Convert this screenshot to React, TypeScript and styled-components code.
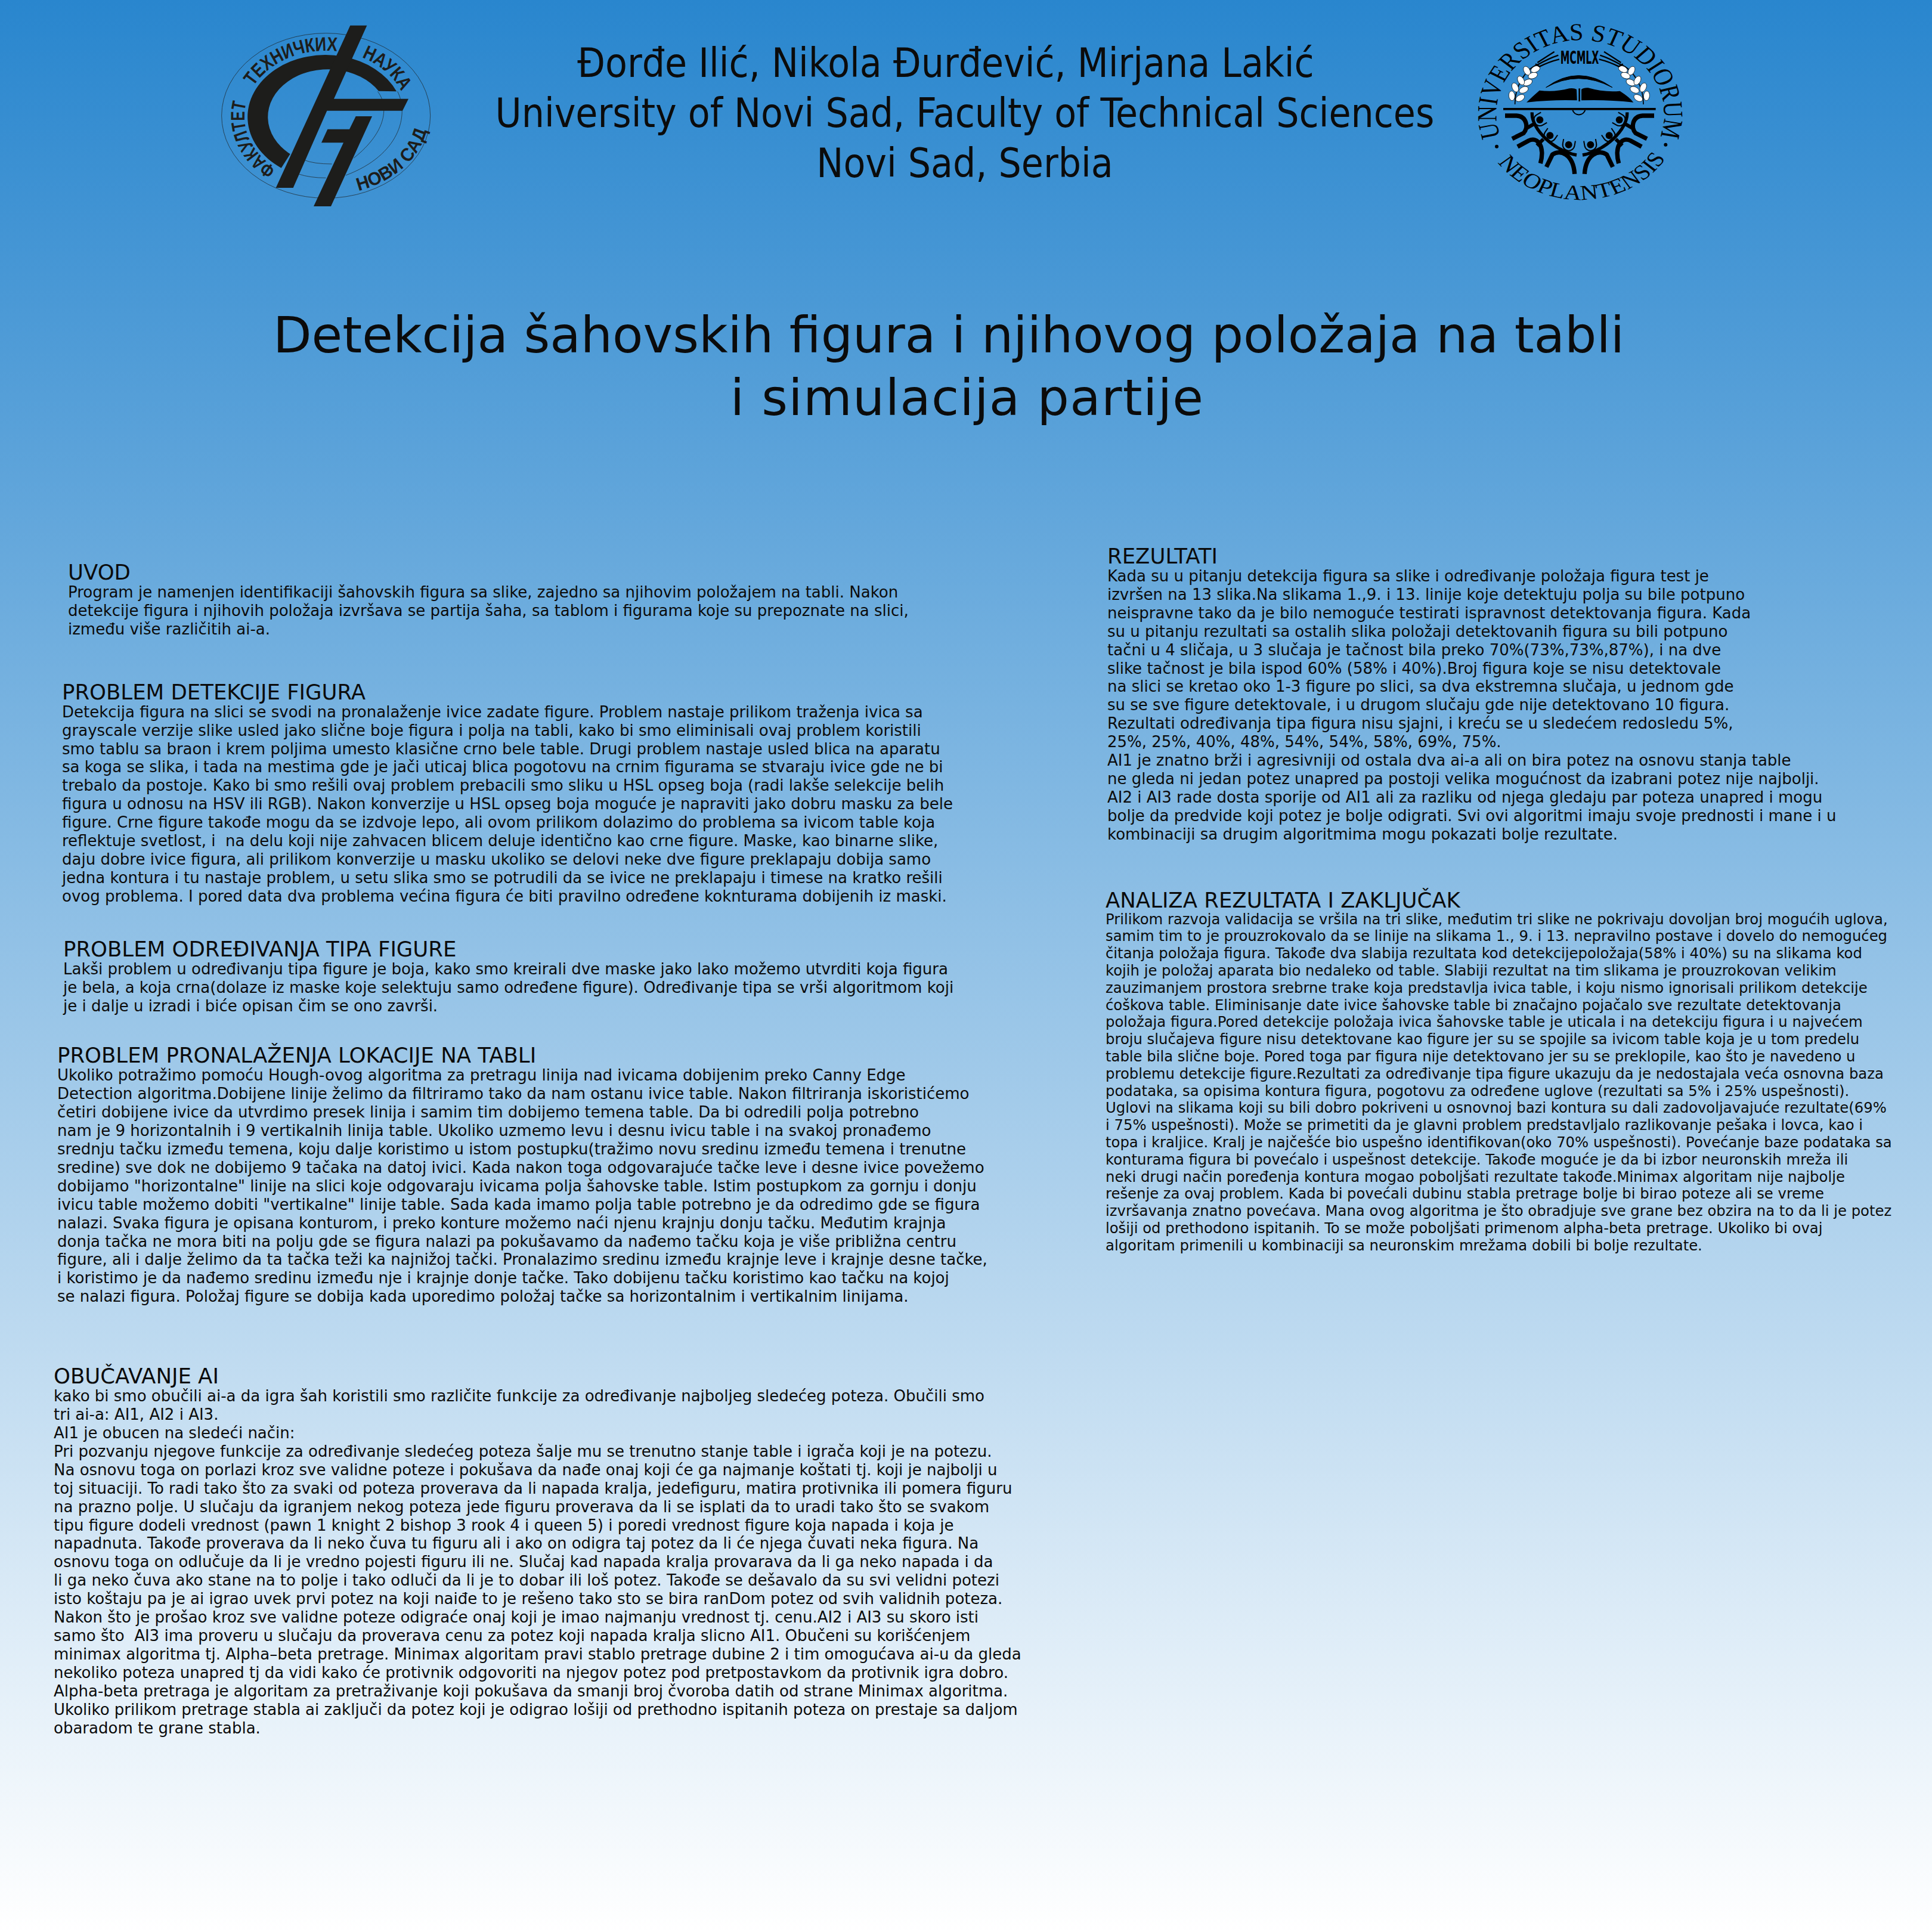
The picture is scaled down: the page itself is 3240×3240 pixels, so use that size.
import React from 'react';
import styled, { createGlobalStyle } from 'styled-components';

const GlobalStyle = createGlobalStyle`
  html, body {
    margin: 0;
    padding: 0;
  }
`;

const Page = styled.div`
  width: 3240px;
  height: 3240px;
  overflow: hidden;
  background: linear-gradient(180deg, #2986ce 0%, #ffffff 100%);
  color: #0b0b0b;
  font-family: 'DejaVu Sans', 'Liberation Sans', sans-serif;
`;

const Header = styled.header`
  display: grid;
  grid-template-columns: 420px 1680px 420px;
  padding: 20px 0 0 340px;
  height: 340px;
`;

const LogoSvg = styled.svg`
  width: 420px;
  height: 340px;
  display: block;
`;

const Affiliation = styled.div`
  padding: 44px 0 0 36px;
  font-family: 'DejaVu Sans Condensed', 'DejaVu Sans', sans-serif;
  font-stretch: condensed;
  font-size: 67px;
  line-height: 84px;
  text-align: center;
`;

const AffiliationLine = styled.div<{ $trail?: number }>`
  white-space: pre;
  padding-right: ${(p) => p.$trail ?? 0}px;
`;

const Title = styled.h1`
  margin: 150px 0 0;
  font-size: 84px;
  line-height: 105px;
  font-weight: 400;
  text-align: center;
  padding-left: 4px;
`;

const TitleLine = styled.div<{ $trail?: number; $tracking?: number }>`
  white-space: pre;
  padding-right: ${(p) => p.$trail ?? 0}px;
  letter-spacing: ${(p) => p.$tracking ?? 0}px;
`;

const Columns = styled.main`
  display: grid;
  grid-template-columns: 1820px 1420px;
`;

const Column = styled.div<{ $top: number }>`
  display: flex;
  flex-direction: column;
  padding-top: ${(p) => p.$top}px;
`;

const Section = styled.section<{ $left: number; $gap: number }>`
  margin-left: ${(p) => p.$left}px;
  margin-top: ${(p) => p.$gap}px;
`;

const Heading = styled.h2`
  margin: 0;
  font-size: 35.5px;
  line-height: 36px;
  font-weight: 400;
  white-space: pre;
`;

const Line = styled.div<{ $small?: boolean }>`
  white-space: pre;
  font-size: ${(p) => (p.$small ? 24.3 : 26)}px;
  line-height: ${(p) => (p.$small ? 28.8 : 30.9)}px;
`;

const ink = '#1d1d1b';

const FacultyLogo = () => (
  <LogoSvg viewBox="0 0 1260 1020">
    <defs>
      <path id="ftn-top" d="M 620 855 A 410 330 0 1 1 620.1 855" />
      <path id="ftn-bottom" d="M 620 920 A 515 395 0 1 0 619.9 920" />
    </defs>
    <g fill="none" stroke={ink} strokeWidth="2">
      <ellipse cx="620" cy="522" rx="525" ry="415" />
      <path d="M 880 400 C 935 470 930 600 760 735" />
      <path d="M 510 745 Q 560 765 650 765" />
      <path d="M 980 400 C 1040 520 990 720 720 822" />
      <path d="M 480 815 Q 540 835 620 835" />
    </g>
    <g fill={ink}>
      <path d="M 975 400 A 392 312 0 1 0 395 785 L 440 715 A 303 240 0 1 1 885 398 Z" />
      <polygon points="742,68 826,68 660,437 1035,437 1005,497 625,497 455,885 368,885" />
      <polygon points="770,525 852,525 645,978 558,978 708,658 597,658 628,590 738,590" />
    </g>
    <g fill={ink} fontFamily="'Liberation Sans', sans-serif" fontWeight="700">
      <text fontSize="98">
        <textPath href="#ftn-top" startOffset="262" textLength="391" lengthAdjust="spacingAndGlyphs">
          ФАКУЛТЕТ
        </textPath>
      </text>
      <text fontSize="98">
        <textPath href="#ftn-top" startOffset="742" textLength="479" lengthAdjust="spacingAndGlyphs">
          ТЕХНИЧКИХ
        </textPath>
      </text>
      <text fontSize="98">
        <textPath href="#ftn-top" startOffset="1349" textLength="269" lengthAdjust="spacingAndGlyphs">
          НАУКА
        </textPath>
      </text>
      <text fontSize="92">
        <textPath href="#ftn-bottom" startOffset="165" textLength="480" lengthAdjust="spacingAndGlyphs">
          НОВИ САД
        </textPath>
      </text>
    </g>
  </LogoSvg>
);

const grains: [number, number, number][] = [
  [286, 422, 85],
  [303, 380, 65],
  [328, 433, -30],
  [346, 392, -25],
  [366, 355, -25],
  [332, 345, 60],
  [362, 296, 60],
  [392, 320, -20],
  [405, 288, -25],
];

const WheatBranch = () => (
  <g>
    <path d="M 302 465 C 300 380 350 290 420 262" fill="none" stroke="#000" strokeWidth="5" />
    {grains.map(([x, y, r]) => (
      <ellipse
        key={`${x}-${y}`}
        cx={x}
        cy={y}
        rx="24"
        ry="15"
        transform={`rotate(${r} ${x} ${y})`}
        fill="#fff"
        stroke="#000"
        strokeWidth="2"
      />
    ))}
    <g fill="none" stroke="#000" strokeWidth="7">
      <path d="M 415 255 Q 460 225 500 200" />
      <path d="M 418 265 Q 470 235 520 218" />
      <path d="M 425 275 Q 475 250 525 238" />
      <path d="M 405 262 L 428 277" />
    </g>
  </g>
);

const arches = [
  'M 252 522 L 310 522 C 360 525 372 580 345 610 L 288 638',
  'M 315 678 L 370 648 C 420 625 452 680 430 762',
  'M 460 780 L 490 718 C 530 690 595 715 602 815',
];

const cups: [number, number, number][] = [
  [427, 543, 60],
  [478, 622, 35],
  [572, 668, 10],
];

const GearHalf = () => (
  <g>
    <g fill="none" stroke="#000" strokeWidth="22">
      {arches.map((d) => (
        <path key={d} d={d} />
      ))}
    </g>
    <path d="M 352 590 L 395 565 M 412 672 L 445 640 M 525 705 L 540 690" stroke="#000" strokeWidth="18" fill="none" />
    <path d="M 388 505 C 382 590 500 700 612 720" fill="none" stroke="#000" strokeWidth="16" />
    {cups.map(([x, y, r]) => (
      <g key={`${x}-${y}`}>
        <path
          d={`M ${x - 30} ${y - 24} L ${x - 30} ${y} A 30 30 0 0 0 ${x + 30} ${y} L ${x + 30} ${y - 24}`}
          transform={`rotate(${r} ${x} ${y})`}
          fill="none"
          stroke="#000"
          strokeWidth="6"
        />
        <circle cx={x} cy={y} r="18" fill="#000" />
      </g>
    ))}
  </g>
);

const UniversityLogo = () => (
  <LogoSvg viewBox="0 0 1260 1020">
    <defs>
      <path id="uns-top" d="M 0 370 A 370 370 0 1 1 0.1 370" />
      <path id="uns-bottom" d="M -435 0 A 435 435 0 1 0 435 0" />
    </defs>
    <g fontFamily="'Liberation Serif', serif" fill="#000">
      <g transform="translate(630 512) scale(1.14 1)">
        <text fontSize="122">
          <textPath href="#uns-top" startOffset="462" textLength="1400" lengthAdjust="spacingAndGlyphs">
            UNIVERSITAS STUDIORUM
          </textPath>
        </text>
      </g>
      <g transform="translate(630 510) scale(1.16 1)">
        <text fontSize="106">
          <textPath href="#uns-bottom" startOffset="263" textLength="865" lengthAdjust="spacingAndGlyphs">
            NEOPLANTENSIS
          </textPath>
        </text>
      </g>
      <text
        x="530"
        y="260"
        fontFamily="'DejaVu Sans Condensed', 'DejaVu Sans', sans-serif"
        fontWeight="700"
        fontSize="92"
        textLength="194"
        lengthAdjust="spacingAndGlyphs"
      >
        MCMLX
      </text>
    </g>
    <circle cx="210" cy="677" r="9" fill="#000" />
    <circle cx="1060" cy="668" r="9" fill="#000" />
    <WheatBranch />
    <g transform="translate(1250 0) scale(-1 1)">
      <WheatBranch />
    </g>
    <g fill="#000">
      <path d="M 458 380 Q 620 260 792 380 Q 620 290 458 380 Z" stroke="#000" strokeWidth="3" />
      <path d="M 360 455 Q 390 425 425 395 Q 500 405 575 385 Q 600 382 612 390 L 614 445 Q 500 440 360 455 Z" />
      <path d="M 898 455 Q 880 430 830 398 Q 750 405 670 382 Q 648 380 636 390 L 636 445 Q 760 440 898 455 Z" />
      <rect x="622" y="385" width="8" height="65" />
      <rect x="243" y="483" width="767" height="11" />
    </g>
    <path d="M 592 494 A 33 33 0 0 0 655 494" fill="none" stroke="#000" strokeWidth="6" />
    <GearHalf />
    <g transform="translate(1254 0) scale(-1 1)">
      <GearHalf />
    </g>
  </LogoSvg>
);

const sections = {
  left: [
    {
      left: 114,
      gap: 0,
      title: 'UVOD',
      lines: [
        'Program je namenjen identifikaciji šahovskih figura sa slike, zajedno sa njihovim položajem na tabli. Nakon',
        'detekcije figura i njihovih položaja izvršava se partija šaha, sa tablom i figurama koje su prepoznate na slici,',
        'između više različitih ai-a.',
      ],
    },
    {
      left: 104,
      gap: 72,
      title: 'PROBLEM DETEKCIJE FIGURA',
      lines: [
        'Detekcija figura na slici se svodi na pronalaženje ivice zadate figure. Problem nastaje prilikom traženja ivica sa',
        'grayscale verzije slike usled jako slične boje figura i polja na tabli, kako bi smo eliminisali ovaj problem koristili',
        'smo tablu sa braon i krem poljima umesto klasične crno bele table. Drugi problem nastaje usled blica na aparatu',
        'sa koga se slika, i tada na mestima gde je jači uticaj blica pogotovu na crnim figurama se stvaraju ivice gde ne bi',
        'trebalo da postoje. Kako bi smo rešili ovaj problem prebacili smo sliku u HSL opseg boja (radi lakše selekcije belih',
        'figura u odnosu na HSV ili RGB). Nakon konverzije u HSL opseg boja moguće je napraviti jako dobru masku za bele',
        'figure. Crne figure takođe mogu da se izdvoje lepo, ali ovom prilikom dolazimo do problema sa ivicom table koja',
        'reflektuje svetlost, i  na delu koji nije zahvacen blicem deluje identično kao crne figure. Maske, kao binarne slike,',
        'daju dobre ivice figura, ali prilikom konverzije u masku ukoliko se delovi neke dve figure preklapaju dobija samo',
        'jedna kontura i tu nastaje problem, u setu slika smo se potrudili da se ivice ne preklapaju i timese na kratko rešili',
        'ovog problema. I pored data dva problema većina figura će biti pravilno određene koknturama dobijenih iz maski.',
      ],
    },
    {
      left: 106,
      gap: 55,
      title: 'PROBLEM ODREĐIVANJA TIPA FIGURE',
      lines: [
        'Lakši problem u određivanju tipa figure je boja, kako smo kreirali dve maske jako lako možemo utvrditi koja figura',
        'je bela, a koja crna(dolaze iz maske koje selektuju samo određene figure). Određivanje tipa se vrši algoritmom koji',
        'je i dalje u izradi i biće opisan čim se ono završi.',
      ],
    },
    {
      left: 96,
      gap: 50,
      title: 'PROBLEM PRONALAŽENJA LOKACIJE NA TABLI',
      lines: [
        'Ukoliko potražimo pomoću Hough-ovog algoritma za pretragu linija nad ivicama dobijenim preko Canny Edge',
        'Detection algoritma.Dobijene linije želimo da filtriramo tako da nam ostanu ivice table. Nakon filtriranja iskoristićemo',
        'četiri dobijene ivice da utvrdimo presek linija i samim tim dobijemo temena table. Da bi odredili polja potrebno',
        'nam je 9 horizontalnih i 9 vertikalnih linija table. Ukoliko uzmemo levu i desnu ivicu table i na svakoj pronađemo',
        'srednju tačku između temena, koju dalje koristimo u istom postupku(tražimo novu sredinu između temena i trenutne',
        'sredine) sve dok ne dobijemo 9 tačaka na datoj ivici. Kada nakon toga odgovarajuće tačke leve i desne ivice povežemo',
        'dobijamo "horizontalne" linije na slici koje odgovaraju ivicama polja šahovske table. Istim postupkom za gornju i donju',
        'ivicu table možemo dobiti "vertikalne" linije table. Sada kada imamo polja table potrebno je da odredimo gde se figura',
        'nalazi. Svaka figura je opisana konturom, i preko konture možemo naći njenu krajnju donju tačku. Međutim krajnja',
        'donja tačka ne mora biti na polju gde se figura nalazi pa pokušavamo da nađemo tačku koja je više približna centru',
        'figure, ali i dalje želimo da ta tačka teži ka najnižoj tački. Pronalazimo sredinu između krajnje leve i krajnje desne tačke,',
        'i koristimo je da nađemo sredinu između nje i krajnje donje tačke. Tako dobijenu tačku koristimo kao tačku na kojoj',
        'se nalazi figura. Položaj figure se dobija kada uporedimo položaj tačke sa horizontalnim i vertikalnim linijama.',
      ],
    },
    {
      left: 90,
      gap: 100,
      title: 'OBUČAVANJE AI',
      lines: [
        'kako bi smo obučili ai-a da igra šah koristili smo različite funkcije za određivanje najboljeg sledećeg poteza. Obučili smo',
        'tri ai-a: AI1, AI2 i AI3.',
        'AI1 je obucen na sledeći način:',
        'Pri pozvanju njegove funkcije za određivanje sledećeg poteza šalje mu se trenutno stanje table i igrača koji je na potezu.',
        'Na osnovu toga on porlazi kroz sve validne poteze i pokušava da nađe onaj koji će ga najmanje koštati tj. koji je najbolji u',
        'toj situaciji. To radi tako što za svaki od poteza proverava da li napada kralja, jedefiguru, matira protivnika ili pomera figuru',
        'na prazno polje. U slučaju da igranjem nekog poteza jede figuru proverava da li se isplati da to uradi tako što se svakom',
        'tipu figure dodeli vrednost (pawn 1 knight 2 bishop 3 rook 4 i queen 5) i poredi vrednost figure koja napada i koja je',
        'napadnuta. Takođe proverava da li neko čuva tu figuru ali i ako on odigra taj potez da li će njega čuvati neka figura. Na',
        'osnovu toga on odlučuje da li je vredno pojesti figuru ili ne. Slučaj kad napada kralja provarava da li ga neko napada i da',
        'li ga neko čuva ako stane na to polje i tako odluči da li je to dobar ili loš potez. Takođe se dešavalo da su svi velidni potezi',
        'isto koštaju pa je ai igrao uvek prvi potez na koji naiđe to je rešeno tako sto se bira ranDom potez od svih validnih poteza.',
        'Nakon što je prošao kroz sve validne poteze odigraće onaj koji je imao najmanju vrednost tj. cenu.AI2 i AI3 su skoro isti',
        'samo što  AI3 ima proveru u slučaju da proverava cenu za potez koji napada kralja slicno AI1. Obučeni su korišćenjem',
        'minimax algoritma tj. Alpha–beta pretrage. Minimax algoritam pravi stablo pretrage dubine 2 i tim omogućava ai-u da gleda',
        'nekoliko poteza unapred tj da vidi kako će protivnik odgovoriti na njegov potez pod pretpostavkom da protivnik igra dobro.',
        'Alpha-beta pretraga je algoritam za pretraživanje koji pokušava da smanji broj čvoroba datih od strane Minimax algoritma.',
        'Ukoliko prilikom pretrage stabla ai zaključi da potez koji je odigrao lošiji od prethodno ispitanih poteza on prestaje sa daljom',
        'obaradom te grane stabla.',
      ],
    },
  ],
  right: [
    {
      left: 37,
      gap: 0,
      title: 'REZULTATI',
      lines: [
        'Kada su u pitanju detekcija figura sa slike i određivanje položaja figura test je',
        'izvršen na 13 slika.Na slikama 1.,9. i 13. linije koje detektuju polja su bile potpuno',
        'neispravne tako da je bilo nemoguće testirati ispravnost detektovanja figura. Kada',
        'su u pitanju rezultati sa ostalih slika položaji detektovanih figura su bili potpuno',
        'tačni u 4 sličaja, u 3 slučaja je tačnost bila preko 70%(73%,73%,87%), i na dve',
        'slike tačnost je bila ispod 60% (58% i 40%).Broj figura koje se nisu detektovale',
        'na slici se kretao oko 1-3 figure po slici, sa dva ekstremna slučaja, u jednom gde',
        'su se sve figure detektovale, i u drugom slučaju gde nije detektovano 10 figura.',
        'Rezultati određivanja tipa figura nisu sjajni, i kreću se u sledećem redosledu 5%,',
        '25%, 25%, 40%, 48%, 54%, 54%, 58%, 69%, 75%.',
        'AI1 je znatno brži i agresivniji od ostala dva ai-a ali on bira potez na osnovu stanja table',
        'ne gleda ni jedan potez unapred pa postoji velika mogućnost da izabrani potez nije najbolji.',
        'AI2 i AI3 rade dosta sporije od AI1 ali za razliku od njega gledaju par poteza unapred i mogu',
        'bolje da predvide koji potez je bolje odigrati. Svi ovi algoritmi imaju svoje prednosti i mane i u',
        'kombinaciji sa drugim algoritmima mogu pokazati bolje rezultate.',
      ],
    },
    {
      left: 34,
      gap: 77,
      small: true,
      title: 'ANALIZA REZULTATA I ZAKLJUČAK',
      lines: [
        'Prilikom razvoja validacija se vršila na tri slike, međutim tri slike ne pokrivaju dovoljan broj mogućih uglova,',
        'samim tim to je prouzrokovalo da se linije na slikama 1., 9. i 13. nepravilno postave i dovelo do nemogućeg',
        'čitanja položaja figura. Takođe dva slabija rezultata kod detekcijepoložaja(58% i 40%) su na slikama kod',
        'kojih je položaj aparata bio nedaleko od table. Slabiji rezultat na tim slikama je prouzrokovan velikim',
        'zauzimanjem prostora srebrne trake koja predstavlja ivica table, i koju nismo ignorisali prilikom detekcije',
        'ćoškova table. Eliminisanje date ivice šahovske table bi značajno pojačalo sve rezultate detektovanja',
        'položaja figura.Pored detekcije položaja ivica šahovske table je uticala i na detekciju figura i u najvećem',
        'broju slučajeva figure nisu detektovane kao figure jer su se spojile sa ivicom table koja je u tom predelu',
        'table bila slične boje. Pored toga par figura nije detektovano jer su se preklopile, kao što je navedeno u',
        'problemu detekcije figure.Rezultati za određivanje tipa figure ukazuju da je nedostajala veća osnovna baza',
        'podataka, sa opisima kontura figura, pogotovu za određene uglove (rezultati sa 5% i 25% uspešnosti).',
        'Uglovi na slikama koji su bili dobro pokriveni u osnovnoj bazi kontura su dali zadovoljavajuće rezultate(69%',
        'i 75% uspešnosti). Može se primetiti da je glavni problem predstavljalo razlikovanje pešaka i lovca, kao i',
        'topa i kraljice. Kralj je najčešće bio uspešno identifikovan(oko 70% uspešnosti). Povećanje baze podataka sa',
        'konturama figura bi povećalo i uspešnost detekcije. Takođe moguće je da bi izbor neuronskih mreža ili',
        'neki drugi način poređenja kontura mogao poboljšati rezultate takođe.Minimax algoritam nije najbolje',
        'rešenje za ovaj problem. Kada bi povećali dubinu stabla pretrage bolje bi birao poteze ali se vreme',
        'izvršavanja znatno povećava. Mana ovog algoritma je što obradjuje sve grane bez obzira na to da li je potez',
        'lošiji od prethodono ispitanih. To se može poboljšati primenom alpha-beta pretrage. Ukoliko bi ovaj',
        'algoritam primenili u kombinaciji sa neuronskim mrežama dobili bi bolje rezultate.',
      ],
    },
  ],
};

type SectionData = {
  left: number;
  gap: number;
  title: string;
  lines: string[];
  small?: boolean;
};

const PosterSection = ({ left, gap, title, lines, small }: SectionData) => (
  <Section $left={left} $gap={gap}>
    <Heading>{title}</Heading>
    {lines.map((line) => (
      <Line key={line} $small={small}>
        {line}
      </Line>
    ))}
  </Section>
);

export default function App() {
  return (
    <>
      <GlobalStyle />
      <Page>
        <Header>
          <FacultyLogo />
          <Affiliation>
            <AffiliationLine $trail={64}>Đorđe Ilić, Nikola Đurđević, Mirjana Lakić</AffiliationLine>
            <AffiliationLine>University of Novi Sad, Faculty of Technical Sciences</AffiliationLine>
            <AffiliationLine>Novi Sad, Serbia</AffiliationLine>
          </Affiliation>
          <UniversityLogo />
        </Header>
        <Title>
          <TitleLine $trail={62}>Detekcija šahovskih figura i njihovog položaja na tabli</TitleLine>
          <TitleLine $tracking={1.3}>i simulacija partije</TitleLine>
        </Title>
        <Columns>
          <Column $top={222}>
            {sections.left.map((s) => (
              <PosterSection key={s.title} {...s} />
            ))}
          </Column>
          <Column $top={195}>
            {sections.right.map((s) => (
              <PosterSection key={s.title} {...s} />
            ))}
          </Column>
        </Columns>
      </Page>
    </>
  );
}
